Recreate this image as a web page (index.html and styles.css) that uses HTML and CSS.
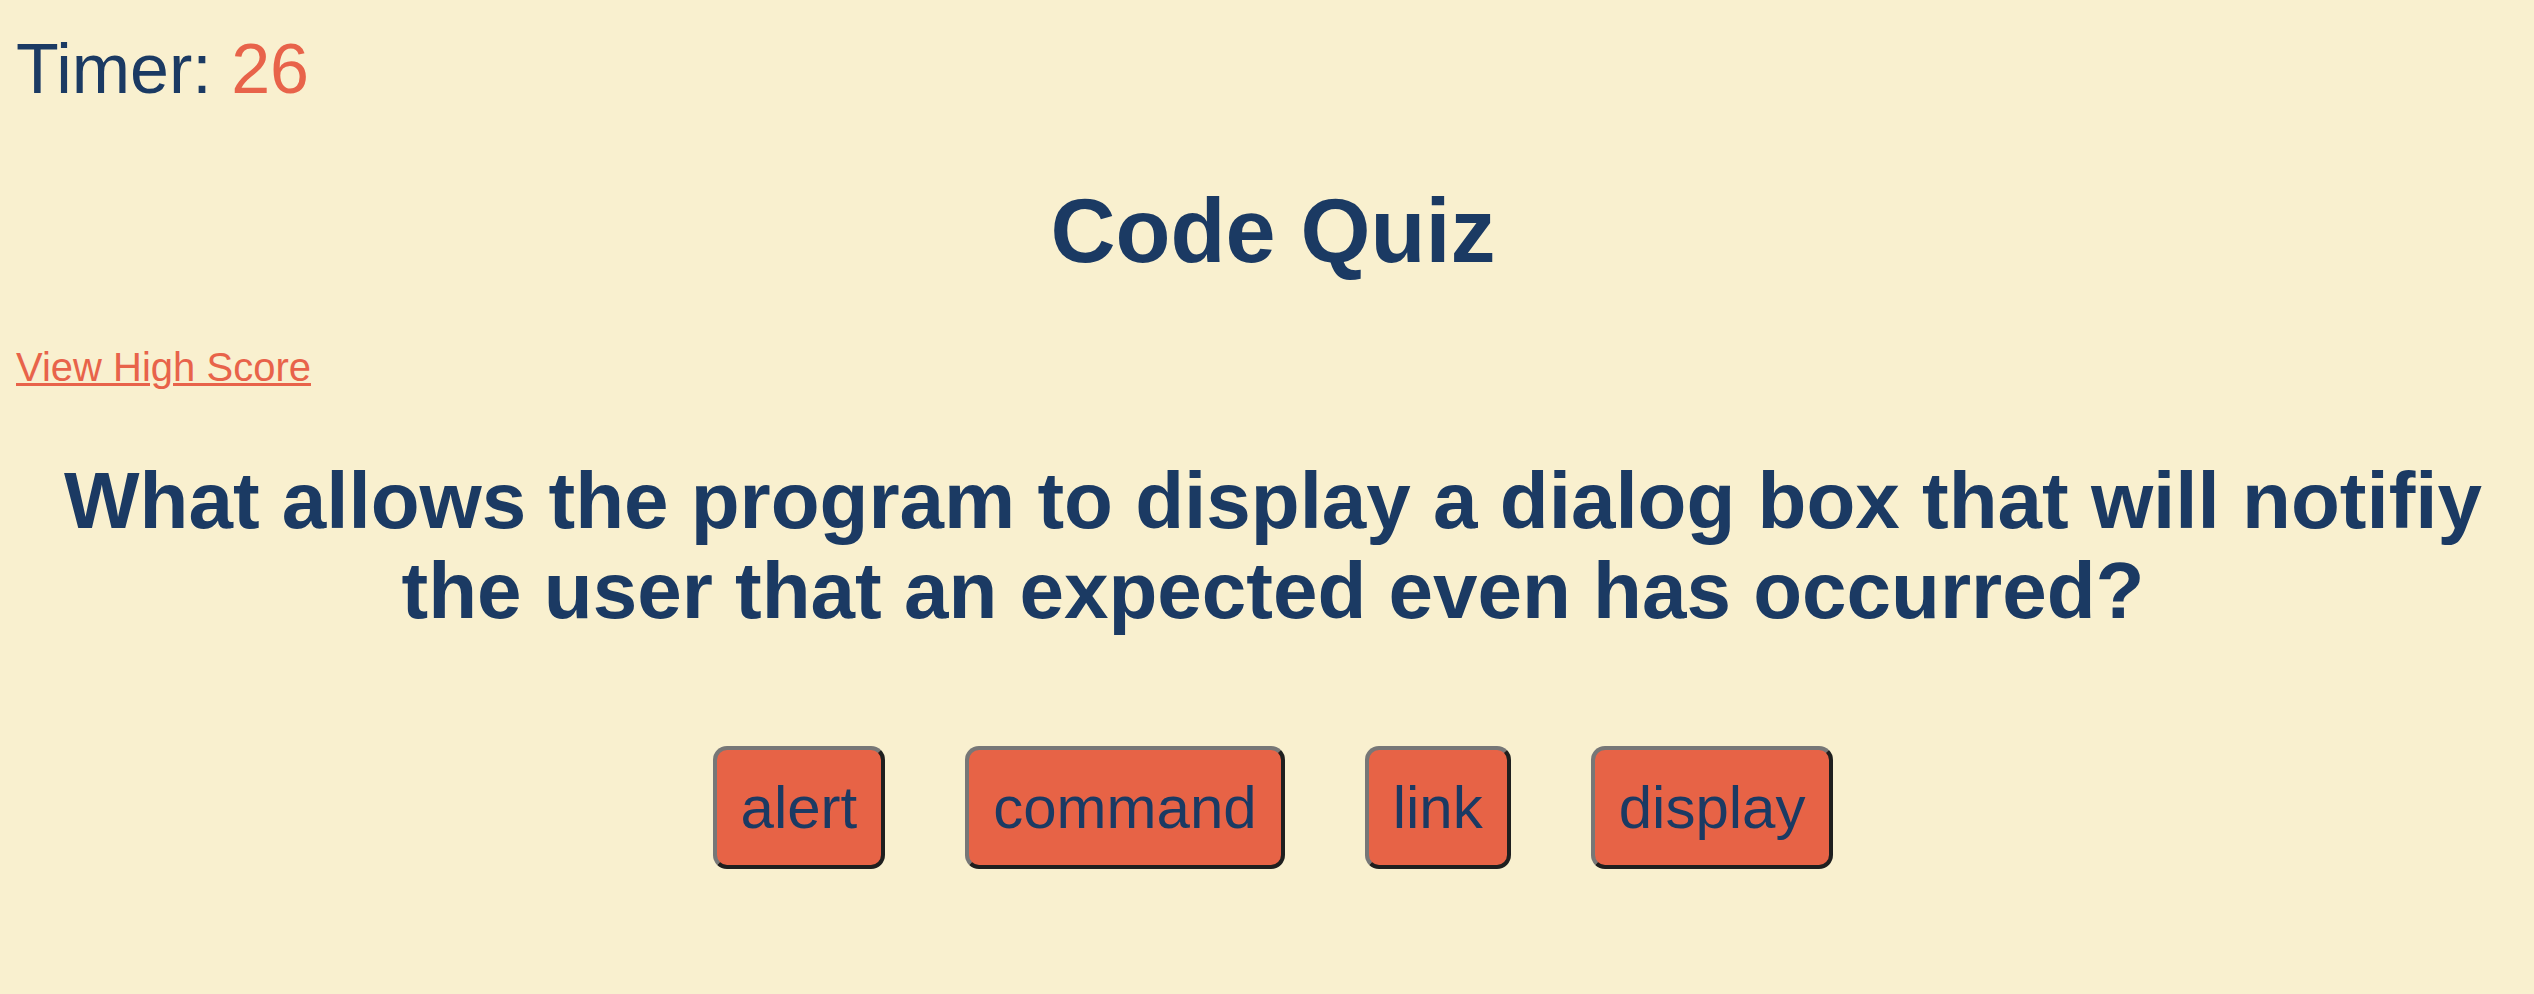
FILE: index.html
```html
<!DOCTYPE html>
<html lang="en">
<head>
<meta charset="utf-8">
<title>Code Quiz</title>
<link rel="stylesheet" href="styles.css">
</head>
<body>
  <header class="top">
    <div class="timer">Timer: <span class="timer-count">26</span></div>
    <h1 class="title">Code Quiz</h1>
    <a class="score-link" href="#">View High Score</a>
  </header>
  <main class="quiz">
    <h2 class="question">What allows the program to display a dialog box that will notifiy the user that an expected even has occurred?</h2>
    <div class="answers">
      <button class="answer">alert</button>
      <button class="answer">command</button>
      <button class="answer">link</button>
      <button class="answer">display</button>
    </div>
  </main>
</body>
</html>
```
FILE: styles.css
```css
html, body {
  margin: 0;
  padding: 0;
}
body {
  background: #f9f0cf;
  color: #1b3a63;
  font-family: "Liberation Sans", Arial, sans-serif;
  padding: 0 4px 0 16px;
  min-height: 994px;
  box-sizing: border-box;
}
.top {
  display: flex;
  flex-direction: column;
}
.timer {
  margin-top: 29px;
  font-size: 70px;
  line-height: normal;
}
.timer-count {
  color: #e8634a;
}
.title {
  margin: 71px 0 0;
  font-size: 90px;
  font-weight: bold;
  line-height: normal;
  text-align: center;
}
.score-link {
  align-self: flex-start;
  margin-top: 62px;
  font-size: 40px;
  line-height: normal;
  color: #e8634a;
  text-decoration: underline;
  text-decoration-thickness: 3px;
}
.quiz {
  display: flex;
  flex-direction: column;
  align-items: center;
}
.question {
  margin: 66px 0 0;
  font-size: 80px;
  font-weight: bold;
  line-height: 90px;
  text-align: center;
}
.answers {
  margin-top: 110px;
  display: flex;
  justify-content: center;
  gap: 80px;
}
.answer {
  font-family: "Liberation Sans", Arial, sans-serif;
  font-size: 60px;
  line-height: normal;
  color: #1b3a63;
  background: #e76346;
  padding: 23px 24px;
  border: 4px solid;
  border-color: #777777 #1f1f1f #1f1f1f #777777;
  border-radius: 14px;
  margin: 0;
}
```
